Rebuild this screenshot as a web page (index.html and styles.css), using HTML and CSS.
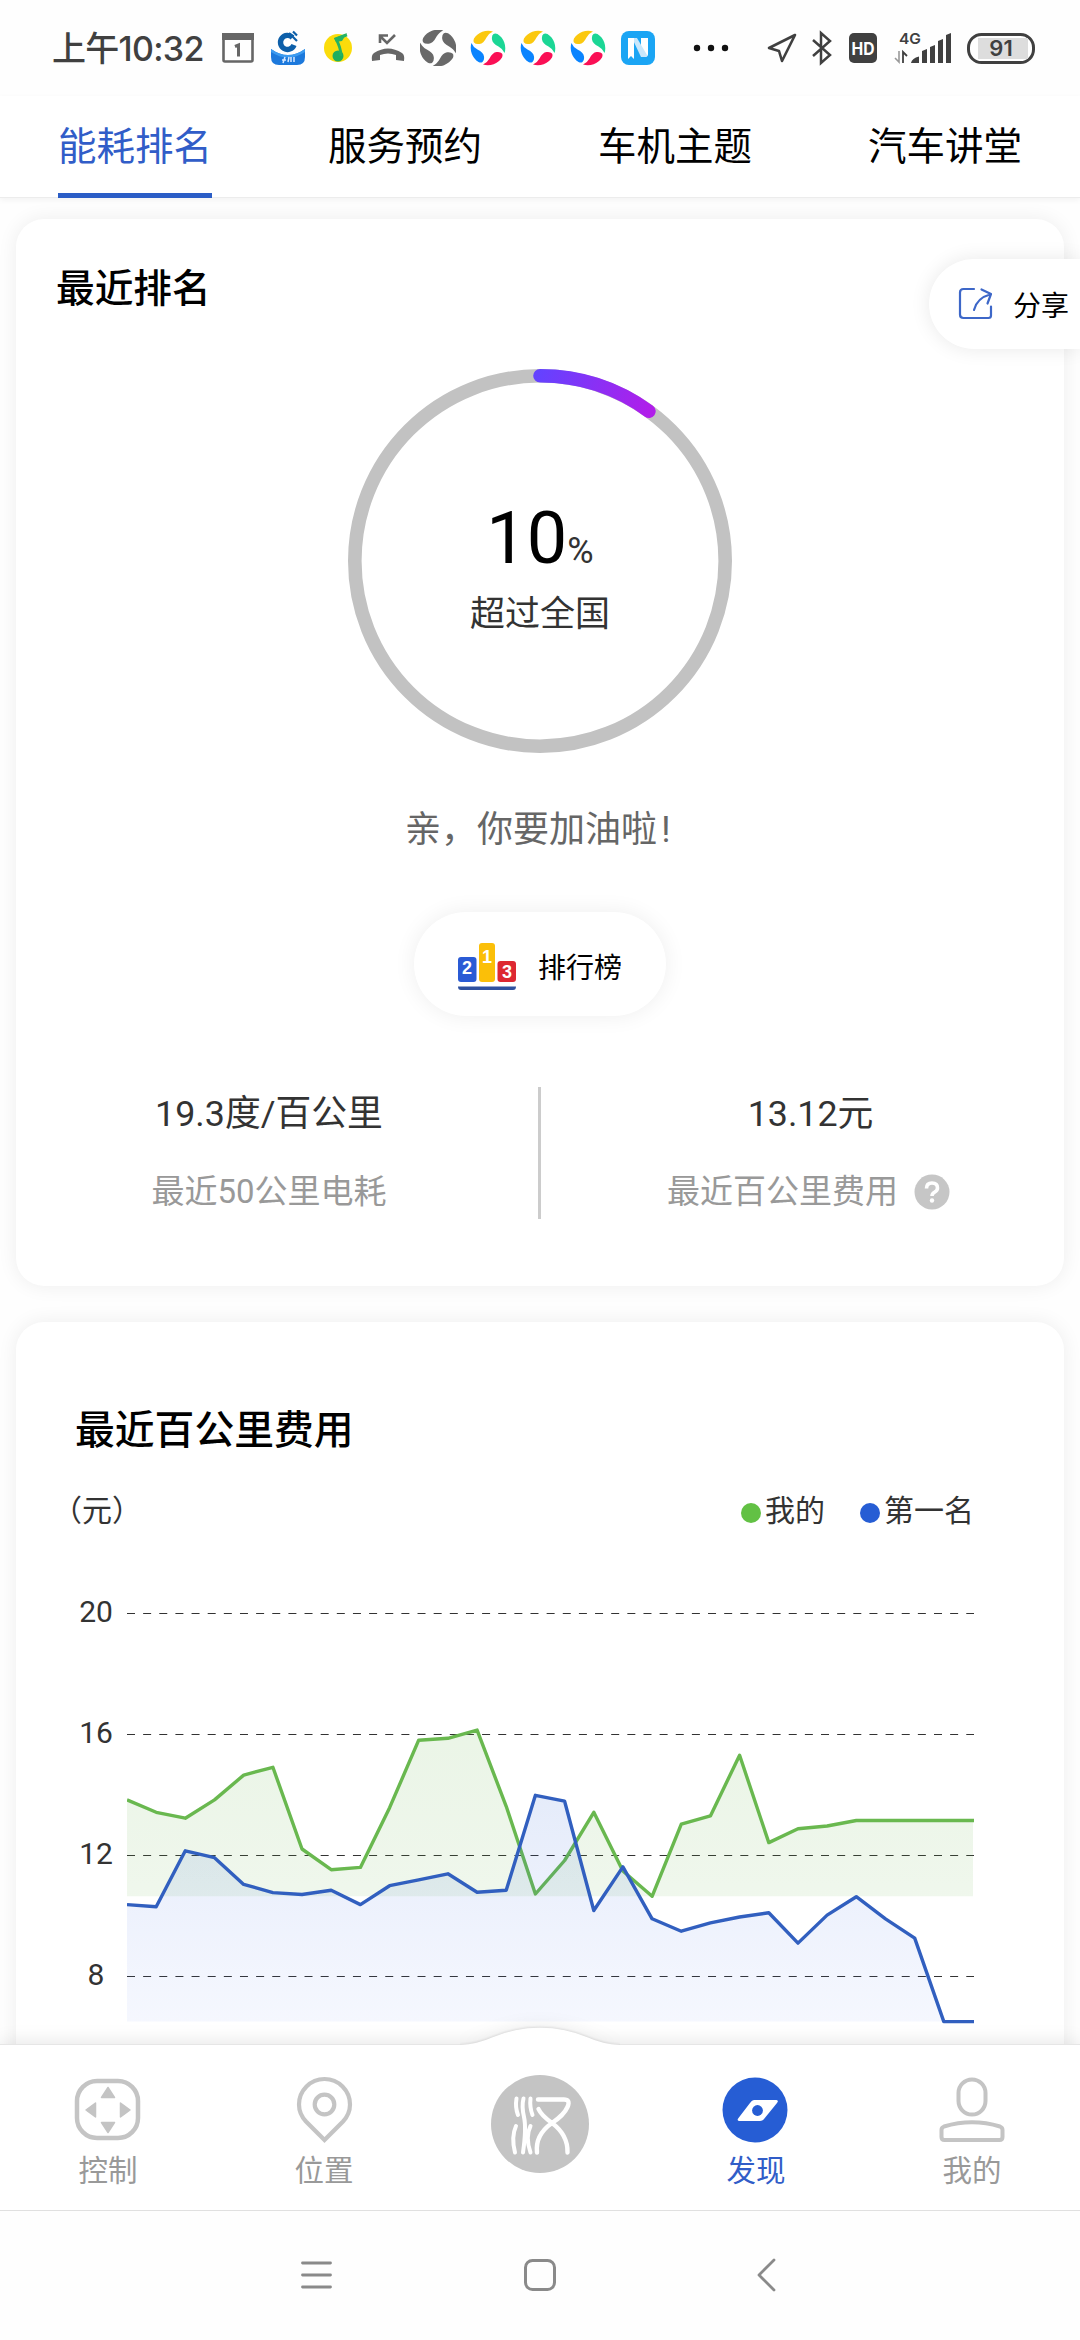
FILE: index.html
```html
<!DOCTYPE html>
<html lang="zh-CN">
<head>
<meta charset="utf-8">
<title>能耗排名</title>
<link rel="stylesheet" href="styles.css">
</head>
<body>
<svg class="defs" width="0" height="0" aria-hidden="true">
  <defs>
    <path id="petal" d="M-14-9.500A17 17 0 0 1 5-16.600Q1-15-1.500-10.500Q-4.500-4.500-8.500-4Q-12.500-3.500-14-5.500Q-15-7-14-9.500Z"/>
    <g id="swirl">
      <use href="#petal" fill="#fbc80f"/>
      <use href="#petal" fill="#1bd695" transform="rotate(90)"/>
      <use href="#petal" fill="#fa0f55" transform="rotate(180)"/>
      <use href="#petal" fill="#0a84ff" transform="rotate(270)"/>
    </g>
  </defs>
</svg>

<div class="status">
  <span class="clock">上午10:32</span>
  <div class="notices">
    <svg width="36" height="36" viewBox="0 0 36 36"><rect x="3.500" y="4.500" width="29" height="27" rx="1.500" fill="none" stroke="#666" stroke-width="2.600"/><path d="M2 3h32v7H2z" fill="#666"/><path d="M15 16.500l3.500-1.500v11.500" fill="none" stroke="#666" stroke-width="3"/></svg>
    <svg width="36" height="36" viewBox="0 0 36 36"><path d="M1 19q17 12 34 0v8q0 8-8 8H9q-8 0-8-8z" fill="#1c79dc"/><path d="M1 19q17 12 34 0v3q-17 11-34 0z" fill="#3b9bf0"/><path d="M22.500 7.500A7 7 0 1 0 24 15" fill="none" stroke="#0d5fa9" stroke-width="5.400"/><path d="M14.500 10h5.500v5.500h-5.500z" fill="#fff"/><path d="M19 3l8 8M23 1.500l4 4" fill="none" stroke="#0d5fa9" stroke-width="2.200"/><path d="M12 30h4m-1-3-2 6m6-6-1 5m3-5v5m3-5v5" stroke="#d5e8ff" stroke-width="1.500"/></svg>
    <svg width="36" height="36" viewBox="0 0 36 36"><circle cx="18" cy="18" r="14" fill="#fbdc0b"/><circle cx="18" cy="26" r="5.500" fill="#1fae5e"/><path d="M21 26q0-8-5-17l11-4" stroke="#25b364" stroke-width="2.800" fill="none"/><path d="M14 8l13-5-5 8-6 1z" fill="#25b364"/></svg>
    <svg width="36" height="36" viewBox="0 0 36 36"><path d="M2 31q-1-6 2-8 14-9 28 0 3 2 2 8l-8-1v-5q-8-3-16 0v5z" fill="#666"/><path d="M25 5l-8 8-7-7M10 13V5.500h8" fill="none" stroke="#666" stroke-width="2.600"/></svg>
    <svg width="36" height="36" viewBox="-18 -18 36 36"><g fill="#696969" transform="scale(1.060)"><use href="#petal"/><use href="#petal" transform="rotate(90)"/><use href="#petal" transform="rotate(180)"/><use href="#petal" transform="rotate(270)"/></g></svg>
    <svg width="36" height="36" viewBox="-18 -18 36 36"><use href="#swirl"/></svg>
    <svg width="36" height="36" viewBox="-18 -18 36 36"><use href="#swirl"/></svg>
    <svg width="36" height="36" viewBox="-18 -18 36 36"><use href="#swirl"/></svg>
    <svg width="36" height="36" viewBox="0 0 36 36"><rect x="1" y="1" width="34" height="34" rx="8" fill="#1ba5f4"/><path d="M21 8h7v16q0 3-3 3h-4z" fill="#fff"/><path d="M12 8h5l10 17q0 2-3 2h-3z" fill="#c9e7fb"/><path d="M8 8h6v21l-3-3-3 3z" fill="#fff"/></svg>
  </div>
  <svg class="more" width="36" height="36" viewBox="0 0 36 36"><g fill="#111"><circle cx="4" cy="18" r="3.200"/><circle cx="18" cy="18" r="3.200"/><circle cx="32" cy="18" r="3.200"/></g></svg>
  <div class="signals">
    <svg width="32" height="32" viewBox="0 0 32 32"><path d="M29 3L3 16l10 3 3 10z" fill="none" stroke="#404040" stroke-width="2.600" stroke-linejoin="round"/></svg>
    <svg width="22" height="36" viewBox="0 0 22 36"><path d="M2 10l17 15-9 8V3l9 8L2 26" fill="none" stroke="#404040" stroke-width="2.500"/></svg>
    <svg width="28" height="30" viewBox="0 0 28 30"><rect width="28" height="30" rx="5" fill="#404040"/><text x="14" y="21.500" text-anchor="middle" class="hd" textLength="23" lengthAdjust="spacingAndGlyphs">HD</text></svg>
    <svg width="58" height="42" viewBox="0 -4 58 42"><text x="5" y="12.500" class="net" textLength="22" lengthAdjust="spacingAndGlyphs">4G</text><path d="M5 20v11l-4-4" fill="none" stroke="#999" stroke-width="1.600"/><path d="M9 32V21l4 4" fill="none" stroke="#404040" stroke-width="1.800"/><path d="M17 32q1-5 8-6.500V32zM28 20l5-2v14h-5zM36 16l5-2v18h-5zM44 10l5-2v24h-5zM52 4l5-2v30h-5z" fill="#404040"/></svg>
    <svg width="68" height="32" viewBox="0 0 68 32"><rect x="1.500" y="2.500" width="65" height="28" rx="13" fill="#fff" stroke="#404040" stroke-width="3"/><rect x="11" y="6" width="50" height="21" fill="#ddd"/><text x="34" y="24" text-anchor="middle" class="level">91</text></svg>
  </div>
</div>

<nav class="tabs">
  <span class="tab active">能耗排名</span>
  <span class="tab">服务预约</span>
  <span class="tab">车机主题</span>
  <span class="tab">汽车讲堂</span>
</nav>

<main class="content">
  <section class="card rank">
    <h2>最近排名</h2>
    <div class="gauge">
      <svg class="ring" width="384" height="384" viewBox="0 0 384 384">
        <defs><linearGradient id="arc" x1="192" y1="0" x2="301" y2="42" gradientUnits="userSpaceOnUse"><stop offset="0" stop-color="#6442ff"/><stop offset="1" stop-color="#b01eea"/></linearGradient></defs>
        <circle cx="192" cy="192" r="185.200" fill="none" stroke="#c2c2c2" stroke-width="13.600"/>
        <path d="M192 6.800A185.200 185.200 0 0 1 300.900 42.200" fill="none" stroke="url(#arc)" stroke-width="13.600" stroke-linecap="round"/>
      </svg>
      <div class="gauge-text">
        <div class="percent">10<small>%</small></div>
        <div class="beyond">超过全国</div>
      </div>
    </div>
    <p class="cheer">亲，你要加油啦<span class="bang">!</span></p>
    <div class="pill">
      <svg width="58" height="48" viewBox="0 0 58 48"><rect y="14" width="18.500" height="25" rx="3" fill="#2a5bd5"/><rect x="21" width="16" height="39" rx="3" fill="#fbbf08"/><rect x="39.500" y="18" width="18.500" height="21" rx="3" fill="#dd2832"/><path d="M0 43.500h58q0 3.500-3 3.500H3q-3 0-3-3.500z" fill="#2f519f"/><g class="podium" text-anchor="middle"><text x="9" y="31">2</text><text x="29" y="20">1</text><text x="49" y="34.500">3</text></g></svg>
      <span>排行榜</span>
    </div>
    <div class="stats">
      <div class="stat">
        <div class="value">19.3度/百公里</div>
        <div class="label">最近50公里电耗</div>
      </div>
      <div class="stat">
        <div class="value">13.12元</div>
        <div class="label help">最近百公里费用<svg width="36" height="36" viewBox="0 0 36 36"><circle cx="18" cy="18" r="17.500" fill="#c6c6c6"/><path d="M12.500 14.500q0-5.500 5.500-5.500t5.500 5q0 2.500-3 4.300-2.500 1.500-2.500 3.700" fill="none" stroke="#fff" stroke-width="3.600"/><circle cx="18" cy="26.500" r="2.200" fill="#fff"/></svg></div>
      </div>
    </div>
  </section>

  <section class="card cost">
    <h2>最近百公里费用</h2>
    <div class="legend">
      <span class="unit">（元）</span>
      <span class="key"><i class="dot mine"></i>我的</span>
      <span class="key"><i class="dot first"></i>第一名</span>
    </div>
    <div class="chart">
      <div class="axis"><span>20</span><span>16</span><span>12</span><span>8</span></div>
      <svg class="plot" width="848" height="431" viewBox="0 -1 848 431">
        <defs>
          <linearGradient id="gm" x1="0" y1="117" x2="0" y2="283" gradientUnits="userSpaceOnUse"><stop offset="0" stop-color="#62b044" stop-opacity=".13"/><stop offset="1" stop-color="#62b044" stop-opacity=".1"/></linearGradient>
          <linearGradient id="gf" x1="0" y1="182" x2="0" y2="408" gradientUnits="userSpaceOnUse"><stop offset="0" stop-color="#265dd4" stop-opacity=".12"/><stop offset="1" stop-color="#3a66f0" stop-opacity=".05"/></linearGradient>
        </defs>
        <g stroke="#333" stroke-width="1" stroke-dasharray="8 8.140"><path d="M0 .5h847"/><path d="M0 121.500h847"/><path d="M0 242.500h847"/><path d="M0 363.500h847"/></g>
        <path fill="url(#gm)" d="M0 283.300V186.900L29.200 199.300 58.300 205.200 87.500 186.900 116.700 162.100 145.900 154.300 175 236 204.200 256.700 233.400 254.400 262.600 194.700 291.700 127.200 320.900 125.300 350.100 117.100 379.200 193.300 408.400 281 437.600 247.500 466.800 199.300 495.900 258 525.100 283.300 554.300 211.200 583.400 202.900 612.600 142.300 641.800 229.600 671 215.800 700.100 213 729.300 207.500H846V283.300Z"/>
        <path fill="none" stroke="#69b84f" stroke-width="3.400" stroke-linejoin="round" d="M0 186.900L29.200 199.300 58.300 205.200 87.500 186.900 116.700 162.100 145.900 154.300 175 236 204.200 256.700 233.400 254.400 262.600 194.700 291.700 127.200 320.900 125.300 350.100 117.100 379.200 193.300 408.400 281 437.600 247.500 466.800 199.300 495.900 258 525.100 283.300 554.300 211.200 583.400 202.900 612.600 142.300 641.800 229.600 671 215.800 700.100 213 729.300 207.500H847"/>
        <path fill="url(#gf)" d="M0 408.600V291.600L29.200 293.800 58.300 237.800 87.500 244.700 116.700 271.400 145.900 279.600 175 281.500 204.200 277.300 233.400 291.600 262.600 272.700 291.700 266.800 320.900 260.800 350.100 279.200 379.200 277.300 408.400 182.300 437.600 188.200 466.800 297.500 495.900 253.900 525.100 305.800 554.300 318.200 583.400 309.900 612.600 304 641.800 299.800 671 330.100 700.100 302.100 729.300 283.700 758.500 305.800 787.700 325.100 816.800 408.600Z"/>
        <path fill="none" stroke="#315fbf" stroke-width="3.400" stroke-linejoin="round" d="M0 291.600L29.200 293.800 58.300 237.800 87.500 244.700 116.700 271.400 145.900 279.600 175 281.500 204.200 277.300 233.400 291.600 262.600 272.700 291.700 266.800 320.900 260.800 350.100 279.200 379.200 277.300 408.400 182.300 437.600 188.200 466.800 297.500 495.900 253.900 525.100 305.800 554.300 318.200 583.400 309.900 612.600 304 641.800 299.800 671 330.100 700.100 302.100 729.300 283.700 758.500 305.800 787.700 325.100 816.800 408.600H847"/>
      </svg>
    </div>
  </section>
</main>

<div class="share">
  <svg width="36" height="36" viewBox="0 0 36 36"><path d="M17 3H6.500Q3 3 3 6.500v22Q3 32 6.500 32h25Q34 32 34 29.500V20.500M17 24Q20 12 33 8.500M24.500 3.500L34 8l-3.500 9.500" fill="none" stroke="#3d67c8" stroke-width="2.200" stroke-linecap="round" stroke-linejoin="round"/></svg>
  <span>分享</span>
</div>

<footer class="dock">
  <svg class="bump" width="160" height="19" viewBox="0 0 160 19"><path d="M0 19V18Q18 17 32 10.500Q55 .7 80 .7T128 10.500Q142 17 160 18V19Z" fill="#fff"/></svg>
  <div class="item">
    <svg width="70" height="70" viewBox="0 0 70 70"><rect x="4" y="6" width="61" height="57" rx="20" fill="none" stroke="#c4c4c4" stroke-width="4.500"/><path d="M35 12.500l6.500 10h-13zM35 57.500l6.500-10h-13zM13 35l9.500-7v14zM57 35l-9.500-7v14z" fill="#c4c4c4" stroke="#c4c4c4" stroke-width="1.500" stroke-linejoin="round"/></svg>
    <span>控制</span>
  </div>
  <div class="item">
    <svg width="70" height="70" viewBox="0 0 70 70"><path d="M35.500 65L17 46.500Q10 39 10 29.500a25.500 25.500 0 0 1 51 0Q61 39 54 46.500Z" fill="none" stroke="#c4c4c4" stroke-width="4.200"/><circle cx="35.500" cy="29.500" r="9.800" fill="none" stroke="#c4c4c4" stroke-width="4.200"/></svg>
    <span>位置</span>
  </div>
  <div class="item">
    <svg class="brand" width="98" height="98" viewBox="0 0 98 98"><circle cx="49" cy="49" r="49" fill="#c4c4c4"/><path d="M25.500 23.500Q24 32 27 40M32.500 23.500Q30.500 31 33 42T32 77.500M39.500 23.500Q38.500 32 41.500 40M25 51Q20 62 24 77.500M39.500 51Q34 62 39.500 77.500" fill="none" stroke="#fff" stroke-width="4" stroke-linecap="round"/><path d="M47 24.500H72Q80 24 76.500 32Q73 40 61 48Q44 60 46 77.500M47.500 34Q50 40 61 48Q77 60 76.500 77.500" fill="none" stroke="#fff" stroke-width="4.400" stroke-linecap="round"/></svg>
  </div>
  <div class="item current">
    <svg width="70" height="70" viewBox="0 0 70 70"><circle cx="34" cy="35" r="32.500" fill="#265dd4"/><path d="M33 25H55.500Q58 25.500 56 28L43 44Q41.500 46 39 46H18Q15.500 45.500 17.500 43L29 28Q31 25.200 33 25Z" fill="#fff"/><circle cx="36.500" cy="35.500" r="5.400" fill="#265dd4"/></svg>
    <span>发现</span>
  </div>
  <div class="item">
    <svg width="70" height="70" viewBox="0 0 70 70"><rect x="21.500" y="4.500" width="27" height="35" rx="13.500" fill="none" stroke="#c4c4c4" stroke-width="4"/><path d="M4.500 55Q4.500 52.500 7 51.500Q35 43 63 51.500Q65.500 52.500 65.500 55V62Q65.500 65 62.500 65H7.500Q4.500 65 4.500 62Z" fill="none" stroke="#c4c4c4" stroke-width="4"/></svg>
    <span>我的</span>
  </div>
</footer>

<div class="system">
  <svg width="36" height="36" viewBox="0 0 36 36"><path d="M6.500 6h28M6.500 18h28M6.500 30h28" stroke="#8a8a8a" stroke-width="2.800" stroke-linecap="round"/></svg>
  <svg width="36" height="36" viewBox="0 0 36 36"><rect x="3.500" y="3.500" width="29" height="29" rx="7" fill="none" stroke="#8a8a8a" stroke-width="3"/></svg>
  <svg width="36" height="36" viewBox="0 0 36 36"><path d="M26 3L11 18l15 15" fill="none" stroke="#8a8a8a" stroke-width="2.800" stroke-linecap="round" stroke-linejoin="round"/></svg>
</div>
</body>
</html>
```

FILE: styles.css
```css
* { box-sizing: border-box; }

body {
  margin: 0;
  width: 1080px;
  height: 2340px;
  display: flex;
  flex-direction: column;
  position: relative;
  overflow: hidden;
  background: #fefefe;
  color: #333;
  font-family: Roboto, "Noto Sans CJK SC", sans-serif;
}

svg { display: block; flex: none; }
.defs { position: absolute; }
h2, p { margin: 0; }

/* status bar */
.status {
  flex: none;
  height: 96px;
  display: flex;
  align-items: center;
}
.clock {
  width: 161px;
  margin-left: 52px;
  padding-top: 2px;
  font: 500 34px/40px Inter, "Noto Sans CJK SC", sans-serif;
  letter-spacing: -0.7px;
  color: #404040;
  white-space: nowrap;
}
.notices { display: grid; grid-template-columns: repeat(9, 50px); justify-items: center; }
.more { margin-left: 30px; }
.signals { display: flex; align-items: center; margin-left: 37px; width: 270px; }
.signals svg:nth-child(2) { margin-left: 13px; }
.signals svg:nth-child(3) { margin-left: 16px; }
.signals svg:nth-child(4) { margin-left: 17px; }
.signals svg:nth-child(5) { margin-left: 15px; }
.hd { font: 700 17px Inter, sans-serif; fill: #fff; }
.net { font: 600 15px Inter, sans-serif; fill: #404040; }
.level { font: 600 22px Inter, sans-serif; fill: #404040; }

/* tabs */
.tabs {
  flex: none;
  height: 102px;
  display: grid;
  grid-template-columns: repeat(4, 270px);
  justify-items: center;
  background: #fff;
  border-bottom: 1px solid #ececec;
  box-shadow: 0 2px 6px rgba(0, 0, 0, .05);
  position: relative;
}
.tab {
  height: 102px;
  font-size: 38.5px;
  line-height: 101px;
  color: #000;
  border-bottom: 5px solid transparent;
}
.active { color: #315dc8; border-color: #2b5dc6; }

/* cards */
.content {
  flex: 1;
  min-height: 0;
  overflow: hidden;
  padding: 21px 16px 0;
  display: flex;
  flex-direction: column;
  gap: 36px;
}
.card {
  flex: none;
  background: #fff;
  border-radius: 28px;
  box-shadow: 0 0 20px rgba(0, 0, 0, .07);
}
.rank {
  height: 1067px;
  display: flex;
  flex-direction: column;
  align-items: center;
}
.card h2 { font-weight: 500; color: #000; }
.rank h2 {
  align-self: flex-start;
  margin: 41px 0 0 40px;
  font-size: 38.7px;
  line-height: 58px;
}
.gauge { display: grid; margin-top: 51px; width: 384px; height: 384px; }
.gauge > * { grid-area: 1 / 1; }
.gauge-text { text-align: center; padding-top: 122px; }
.percent { font-size: 72px; line-height: 96px; color: #000; }
.percent small { font-size: 36px; color: #333; }
.beyond { font-size: 35px; line-height: 56px; margin-top: -12px; }
.cheer { margin-top: 50px; font-size: 36px; line-height: 54px; color: #666; }
.bang { display: inline-block; width: 18px; text-align: center; }
.pill {
  margin-top: 55px;
  width: 252px;
  height: 104px;
  padding-left: 44px;
  border-radius: 52px;
  background: #fff;
  box-shadow: 0 0 22px rgba(0, 0, 0, .07);
  display: flex;
  align-items: center;
  gap: 22px;
  font-size: 28px;
  color: #000;
}
.pill svg { margin-top: 6px; }
.pill span { margin-top: 3px; }
.podium { font: 900 18px "Liberation Sans", Arial, sans-serif; fill: #fff; }
.stats {
  width: 1080px;
  height: 132px;
  margin-top: 71px;
  display: grid;
  grid-template-columns: 540px 540px;
}
.stat {
  display: flex;
  flex-direction: column;
  align-items: center;
}
.stat + .stat { border-left: 3px solid #ccc; margin-left: -2px; }
.stat:first-child { padding-right: 2px; }
.value { font-size: 35.8px; line-height: 52px; margin-top: 1px; }
.label {
  display: flex;
  align-items: center;
  gap: 17px;
  margin-top: 28px;
  font-size: 33px;
  line-height: 48px;
  color: #999;
}
.help { gap: 16px; margin-right: 4px; }

/* cost chart */
.cost { height: 900px; }
.cost h2 { padding: 80px 0 0 59px; font-size: 39.8px; line-height: 58px; }
.legend {
  margin-top: 29px;
  padding: 0 90px 0 36px;
  display: flex;
  align-items: center;
  gap: 35px;
  font-size: 30px;
  line-height: 44px;
}
.unit { margin-right: auto; }
.key { display: flex; align-items: center; gap: 4px; }
.dot { width: 20px; height: 20px; margin-top: 3px; border-radius: 50%; }
.mine { background: #62c144; }
.first { background: #265dd4; }
.chart { display: flex; padding-left: 49px; margin-top: 18px; }
.axis { display: grid; grid-template-rows: repeat(4, 121px); width: 62px; }
.axis span { text-align: center; font-size: 30px; line-height: 121px; }
.plot { margin-top: 61px; }

/* floating share button */
.share {
  position: absolute;
  top: 259px;
  right: 0;
  width: 151px;
  height: 90px;
  padding-left: 28px;
  display: flex;
  align-items: center;
  gap: 20px;
  border-radius: 45px 0 0 45px;
  background: #fff;
  box-shadow: 0 0 20px rgba(0, 0, 0, .09);
  font-size: 28px;
  color: #000;
  white-space: nowrap;
}

/* bottom navigation */
.dock {
  flex: none;
  height: 167px;
  position: relative;
  display: grid;
  grid-template-columns: repeat(5, 216px);
  background: #fff;
  border-top: 1px solid #e6e6e6;
  border-bottom: 1px solid #e0e0e0;
  box-shadow: 0 -2px 18px rgba(0, 0, 0, .1);
}
.bump {
  position: absolute;
  left: 460px;
  top: -18px;
  filter: drop-shadow(0 -1px 1px rgba(0, 0, 0, .1)) drop-shadow(0 -2px 8px rgba(0, 0, 0, .07));
  clip-path: inset(-20px 0 0 0);
}
.item {
  display: flex;
  flex-direction: column;
  align-items: center;
  padding-top: 30px;
  font-size: 29.5px;
  line-height: 44px;
  color: #999;
}
.item span { margin-top: 4px; }
.current { color: #315dc8; }

/* system keys */
.system {
  flex: none;
  height: 129px;
  padding-bottom: 2px;
  position: relative;
  background: #fefefe;
  display: flex;
  justify-content: center;
  align-items: center;
  gap: 190px;
}
```
